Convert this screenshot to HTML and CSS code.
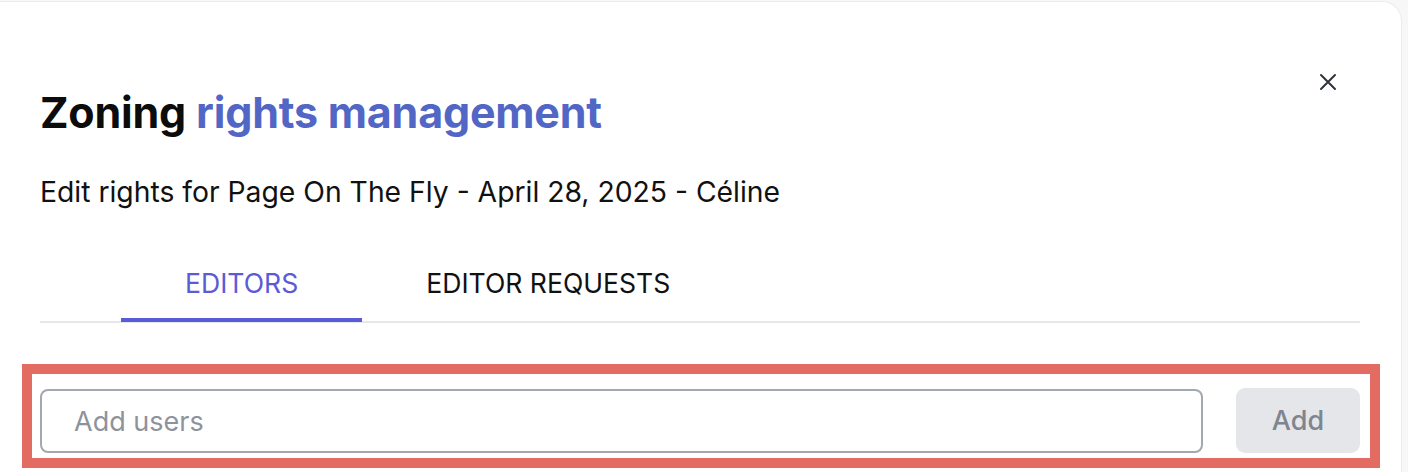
FILE: index.html
```html
<!DOCTYPE html>
<html lang="en">
<head>
<meta charset="utf-8">
<title>Zoning rights management</title>
<link rel="stylesheet" href="styles.css">
</head>
<body>
<div class="modal">
  <div class="modal-header">
    <h1 class="title">Zoning <span class="title-accent">rights management</span></h1>
    <button class="close" aria-label="Close">
      <svg width="18" height="18" viewBox="0 0 18 18"><path d="M2 2 L16 16 M16 2 L2 16" stroke="#2f343b" stroke-width="2" stroke-linecap="round"/></svg>
    </button>
  </div>
  <p class="subtitle">Edit rights for Page On The Fly - April 28, 2025 - Céline</p>
  <div class="tabs">
    <div class="tab tab-active">EDITORS</div>
    <div class="tab">EDITOR REQUESTS</div>
  </div>
  <div class="highlight">
    <div class="add-row">
      <input class="add-input" type="text" placeholder="Add users">
      <button class="add-btn">Add</button>
    </div>
  </div>
</div>
</body>
</html>
```

FILE: styles.css
```css
html, body {
  margin: 0;
  padding: 0;
  background: #f7f7f8;
  overflow: hidden;
}
body {
  font-family: "Inter", "Liberation Sans", sans-serif;
  height: 472px;
}
.modal {
  margin: 1px 6px 0 -20px;
  height: 471px;
  background: #ffffff;
  border: 1px solid #ececee;
  border-bottom: none;
  border-radius: 20px 20px 0 0;
  padding: 0 41px 0 59px;
  box-sizing: border-box;
}
.modal-header {
  display: flex;
  justify-content: space-between;
  align-items: flex-start;
}
.title {
  margin: 84px 0 0 0;
  font-size: 43px;
  line-height: 52px;
  font-weight: 700;
  color: #0c0c0c;
  letter-spacing: -0.2px;
}
.title-accent {
  color: #5266c5;
}
.close {
  margin: 71px 23px 0 0;
  padding: 0;
  width: 18px;
  height: 18px;
  border: none;
  background: none;
  display: flex;
}
.subtitle {
  margin: 36px 0 0 0;
  font-size: 28.3px;
  line-height: 36px;
  color: #111111;
}
.tabs {
  display: flex;
  margin-top: 46px;
  padding-left: 81px;
  border-bottom: 2px solid #e6e7ea;
}
.tab {
  text-align: center;
  font-size: 26.6px;
  line-height: 34px;
  padding: 10px 64px 18px;
  color: #111111;
  margin-bottom: -1px;
  border-bottom: 4px solid transparent;
}
.tab-active {
  color: #5b5bd8;
  border-bottom-color: #5b5bd8;
}
.highlight {
  margin: 41px -20px 0 -18px;
  border: 10px solid #e26c61;
  padding: 15px 10px 5px 8px;
}
.add-row {
  display: flex;
  gap: 33px;
}
.add-input {
  flex: 1;
  height: 64px;
  box-sizing: border-box;
  border: 2px solid #a3a8b0;
  border-radius: 8px;
  padding: 0 32px;
  font-family: inherit;
  font-size: 27px;
  color: #111;
  outline: none;
}
.add-input::placeholder {
  color: #8d939c;
}
.add-btn {
  width: 124px;
  height: 65px;
  border: none;
  border-radius: 9px;
  background: #e4e6ea;
  color: #7f858e;
  font-family: inherit;
  font-size: 27px;
  font-weight: 500;
  margin-top: -1px;
}
```
